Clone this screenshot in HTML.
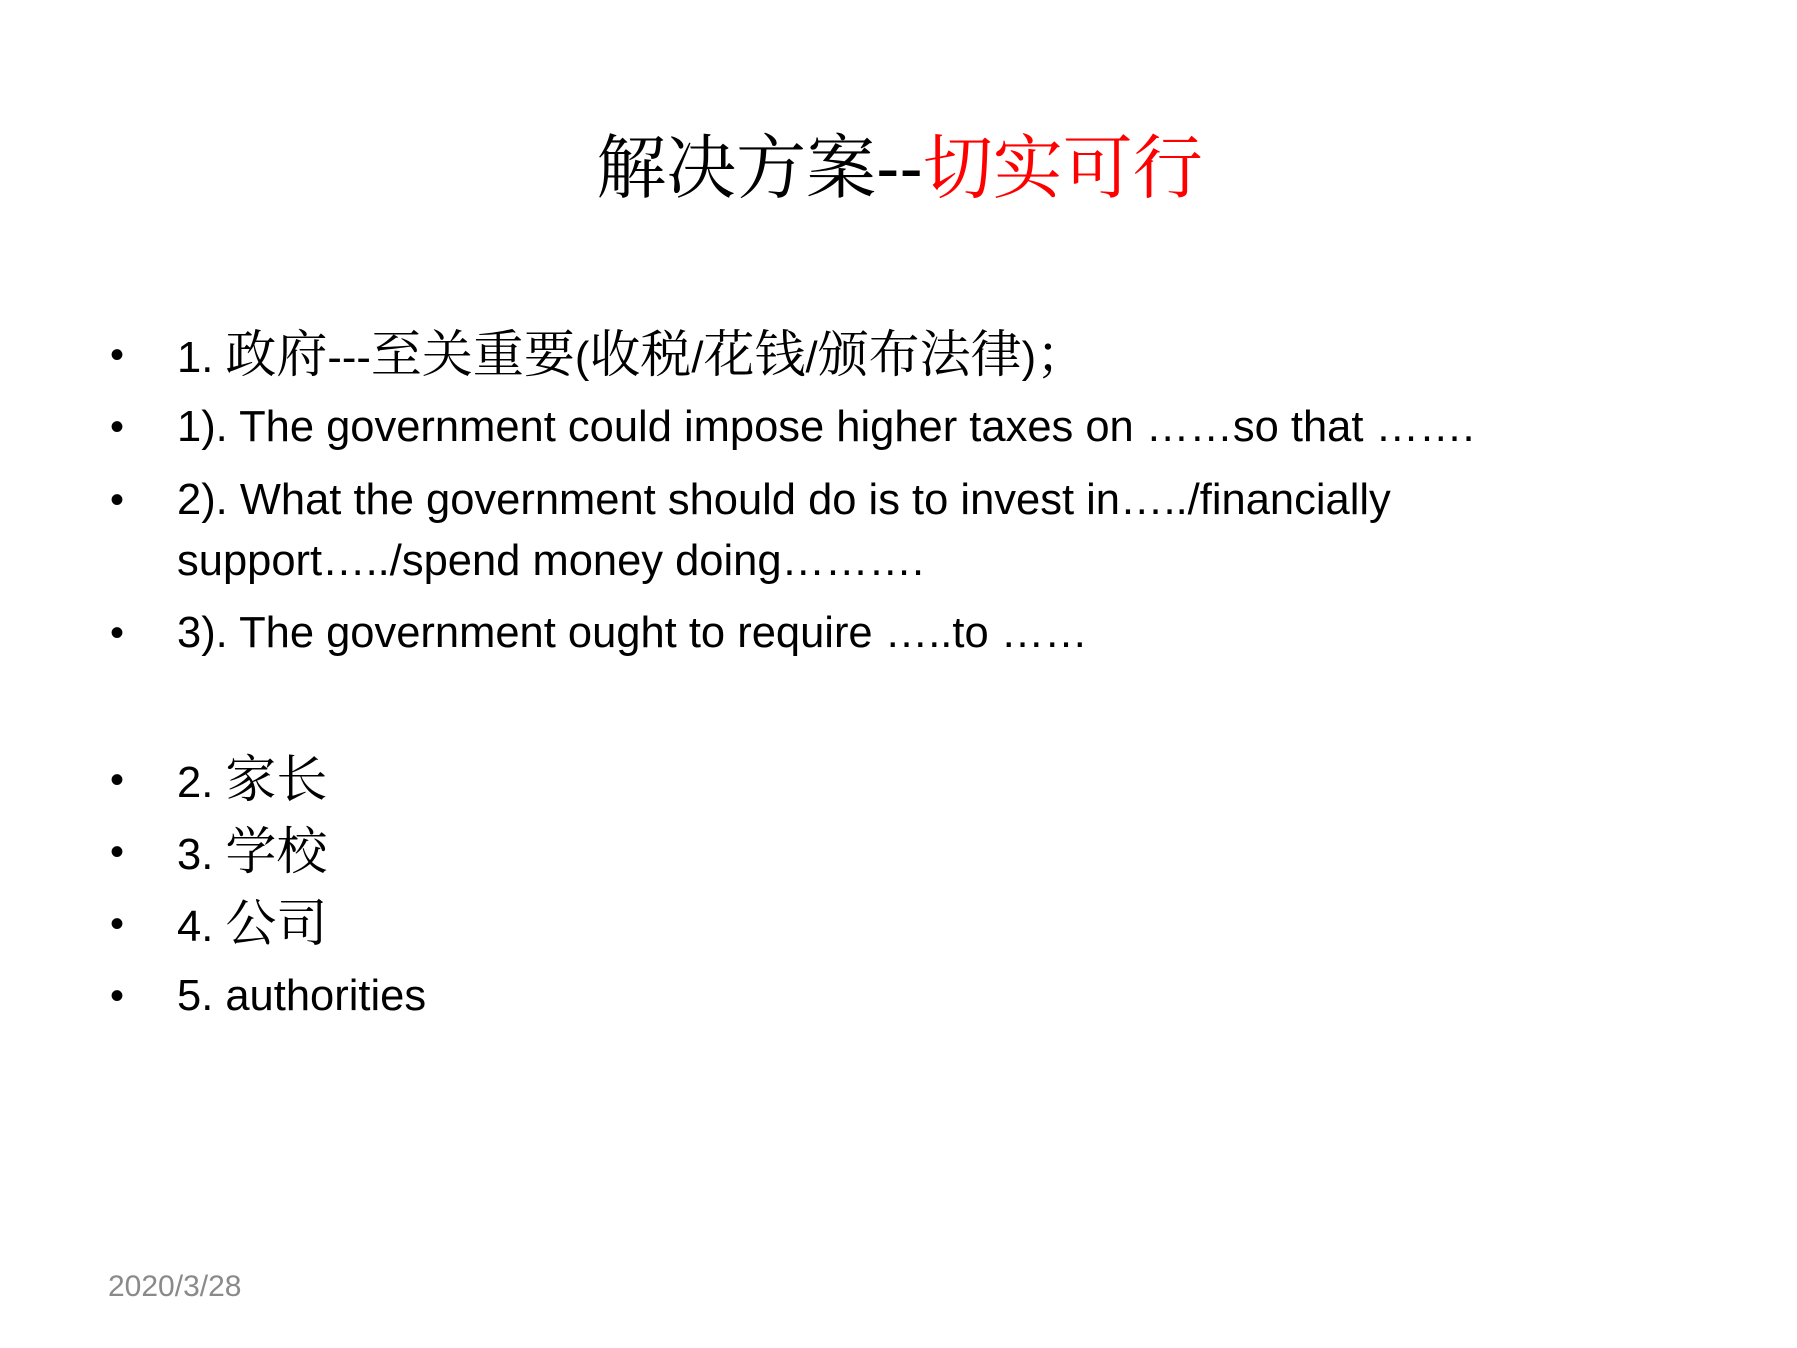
<!DOCTYPE html>
<html><head><meta charset="utf-8"><style>
html,body{margin:0;padding:0;background:#fff;}
body{width:1797px;height:1348px;position:relative;overflow:hidden;font-family:"Liberation Sans","Noto Serif CJK SC",serif;color:#000;}
.t{position:absolute;left:0;width:1797px;top:126px;text-align:center;font-size:70px;line-height:84px;font-family:"Liberation Sans","Noto Serif CJK SC",serif;margin-left:1px;}
.r{color:#ff0000;}
.l{position:absolute;left:177px;font-size:43.5px;line-height:50px;white-space:nowrap;}
.c{font-size:51px;}
.b{position:absolute;left:110px;font-size:40px;line-height:50px;font-family:"Liberation Sans",sans-serif;}
.d{position:absolute;left:108px;top:1270px;font-size:30px;color:#8a8a8a;font-family:"Liberation Sans",sans-serif;}
</style></head><body>
<div class="t">解决方案--<span class="r">切实可行</span></div>
<div class="b" style="top:330px">•</div><div class="l" style="top:330px">1. <span class="c">政府</span>---<span class="c">至关重要</span>(<span class="c">收税</span>/<span class="c">花钱</span>/<span class="c">颁布法律</span>)<span class="c">；</span></div>
<div class="b" style="top:402px">•</div><div class="l" style="top:402px">1). The government could impose higher taxes on ……so that …….</div>
<div class="b" style="top:475px">•</div><div class="l" style="top:475px">2). What the government should do is to invest in…../financially</div>
<div class="l" style="top:536px">support…../spend money doing……….</div>
<div class="b" style="top:608px">•</div><div class="l" style="top:608px">3). The government ought to require …..to ……</div>
<div class="b" style="top:755px">•</div><div class="l" style="top:755px">2. <span class="c">家长</span></div>
<div class="b" style="top:827px">•</div><div class="l" style="top:827px">3. <span class="c">学校</span></div>
<div class="b" style="top:899px">•</div><div class="l" style="top:899px">4. <span class="c">公司</span></div>
<div class="b" style="top:971px">•</div><div class="l" style="top:971px">5. authorities</div>
<div class="d">2020/3/28</div>
</body></html>
